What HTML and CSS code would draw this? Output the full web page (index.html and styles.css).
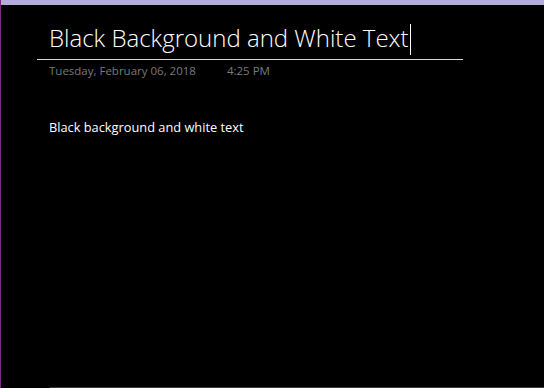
FILE: index.html
```html
<!DOCTYPE html>
<html lang="en">
<head>
    <meta charset="UTF-8">
    <meta name="viewport" content="width=device-width, initial-scale=1.0">
    <title>Black Background and White Text</title>
    <link rel="stylesheet" href="styles.css">
</head>
<body>
    <div class="topbar"></div>
    <div class="page">
        <div class="page-header">
            <div class="title-wrap">
                <h1 class="title">Black Background and White Text<span class="caret"></span></h1>
            </div>
            <div class="meta">
                <span class="date">Tuesday, February 06, 2018</span>
                <span class="time">4:25 PM</span>
            </div>
        </div>
        <div class="note">
            <p>Black background and white text</p>
        </div>
    </div>
    <div class="statusline"></div>
</body>
</html>
```

FILE: styles.css
```css
* {
    margin: 0;
    padding: 0;
    box-sizing: border-box;
}

html, body {
    height: 100%;
}

body {
    background: #000;
    color: #fff;
    font-family: 'Open Sans', 'Noto Sans', sans-serif;
    border-left: 1px solid #7c2a7e;
    overflow: hidden;
    display: flex;
    flex-direction: column;
}

.topbar {
    height: 5px;
    background: #b4aadc;
}

.page {
    flex: 1;
}

.statusline {
    height: 1px;
    margin-left: 49px;
    background: #3c3c40;
}

.page-header {
    padding-top: 18px;
}

.title-wrap {
    width: 426px;
    margin-left: 36px;
    border-bottom: 1px solid #d8d8d8;
    padding-left: 12px;
    padding-bottom: 4px;
}

.title {
    font-family: 'Open Sans', sans-serif;
    font-weight: 300;
    font-size: 24px;
    line-height: 30px;
    letter-spacing: 0;
    white-space: nowrap;
}

.caret {
    display: inline-block;
    width: 1px;
    height: 31px;
    background: #fff;
    vertical-align: -8px;
    margin-left: 1px;
}

.meta {
    margin-left: 48px;
    margin-top: 3px;
    font-size: 11.5px;
    color: #7a7a7a;
    display: flex;
    gap: 31px;
}

.note {
    margin-left: 48px;
    margin-top: 40px;
    font-size: 12.8px;
}
```
